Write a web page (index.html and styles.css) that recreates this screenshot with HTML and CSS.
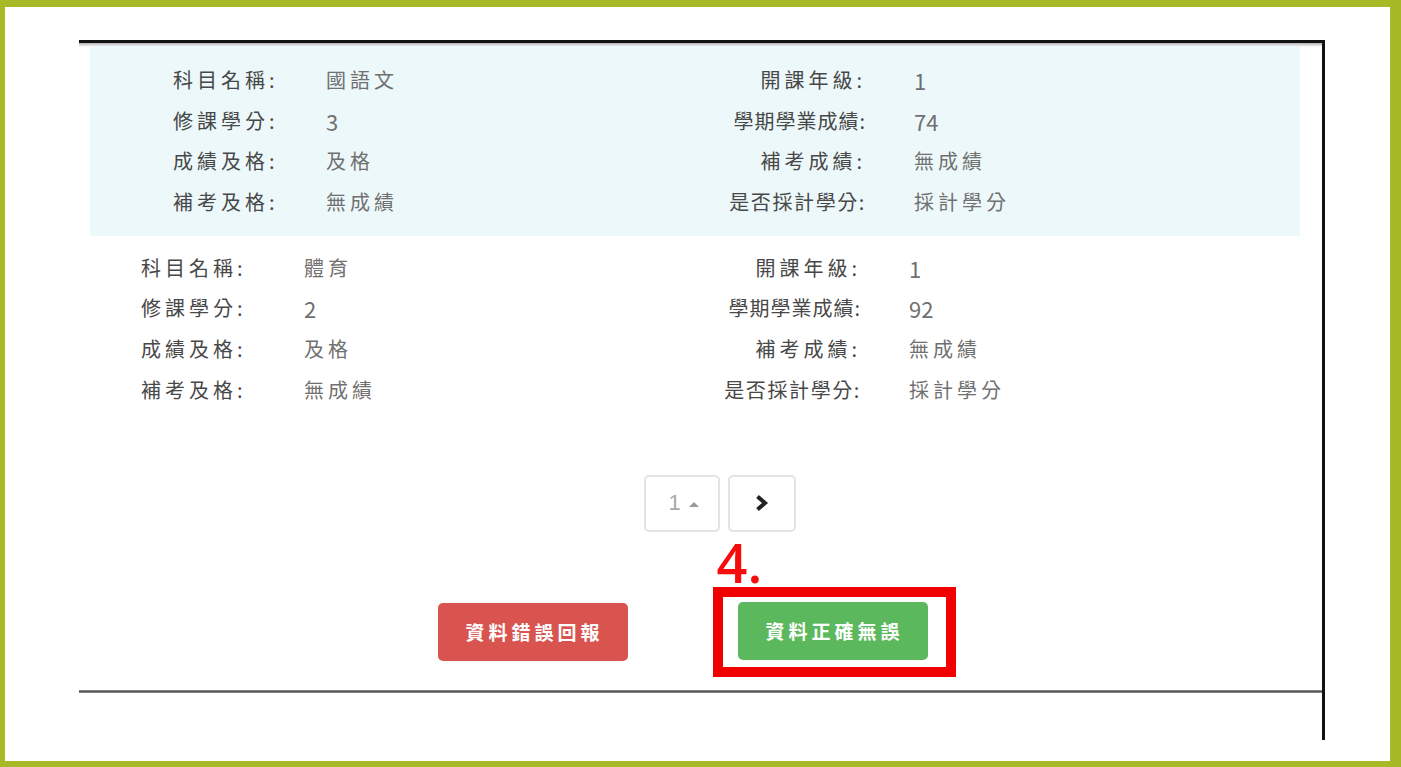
FILE: index.html
```html
<!DOCTYPE html>
<html lang="zh-Hant">
  <head>
    <meta charset="UTF-8" />
    <title>成績確認</title>
    <link rel="stylesheet" href="styles.css">
  </head>
  <body>
    <div class="frame">
      <div class="panel">
        <div class="record shaded">
          <span class="label">科目名稱:</span><span class="value">國語文</span>
          <span class="label right">開課年級:</span><span class="value right num">1</span>
          <span class="label">修課學分:</span><span class="value num">3</span>
          <span class="label right long">學期學業成績:</span><span class="value right num">74</span>
          <span class="label">成績及格:</span><span class="value">及格</span>
          <span class="label right">補考成績:</span><span class="value right">無成績</span>
          <span class="label">補考及格:</span><span class="value">無成績</span>
          <span class="label right long5">是否採計學分:</span><span class="value right">採計學分</span>
        </div>

        <div class="record">
          <span class="label">科目名稱:</span><span class="value">體育</span>
          <span class="label right">開課年級:</span><span class="value right num">1</span>
          <span class="label">修課學分:</span><span class="value num">2</span>
          <span class="label right long">學期學業成績:</span><span class="value right num">92</span>
          <span class="label">成績及格:</span><span class="value">及格</span>
          <span class="label right">補考成績:</span><span class="value right">無成績</span>
          <span class="label">補考及格:</span><span class="value">無成績</span>
          <span class="label right long5">是否採計學分:</span><span class="value right">採計學分</span>
        </div>

        <div class="pager">
          <span class="page current">1<span class="caret"></span></span>
          <a class="page next" href="#">
            <svg width="15" height="18" viewBox="0 0 15 18">
              <path d="M3.5 2.5 L11 9 L3.5 15.5" fill="none" stroke="#222" stroke-width="4" />
            </svg>
          </a>
        </div>

        <div class="actions">
          <button class="btn btn-danger" type="button">資料錯誤回報</button>
          <div class="callout">
            <span class="step">4.</span>
            <button class="btn btn-success" type="button">資料正確無誤</button>
          </div>
        </div>

        <div class="rule"></div>
      </div>
    </div>
  </body>
</html>
```

FILE: styles.css
```css
html,
body {
  margin: 0;
  background-color: #a8b928;
}

body {
  height: 767px;
  overflow: hidden;
  font-family: "Noto Sans CJK TC", "Noto Sans", sans-serif;
}

.frame {
  margin: 7px 11px 0 5px;
  height: 754px;
  padding: 33px 0 0 74px;
  box-sizing: border-box;
  background-color: #fff;
}

.panel {
  width: 1246px;
  height: 700px;
  box-sizing: border-box;
  border-top: 3px solid #111;
  border-right: 3px solid #111;
  background: linear-gradient(rgba(0, 0, 0, 0.3), rgba(0, 0, 0, 0)) no-repeat top / 100% 4px;
  padding-top: 3px;
}

.record {
  display: grid;
  grid-template-columns: 163px 400px 157px 1fr;
  grid-auto-rows: 40.7px;
  align-items: center;
  padding: 12px 0 0 62px;
  font-size: 20px;
  line-height: 40.7px;
  letter-spacing: 4px;
}

.record.shaded {
  grid-template-columns: 153px 383px 157px 1fr;
  margin: 0 22px 0 11px;
  padding: 14px 0 13px 83px;
  background-color: #ecf8fa;
}

.label {
  color: #484848;
  white-space: nowrap;
}

.label.right {
  text-align: right;
}

.label.long {
  letter-spacing: 1px;
}

.label.long5 {
  letter-spacing: 1.6px;
}

.value {
  color: #707070;
  white-space: nowrap;
}

.value.right {
  padding-left: 48px;
}

.value.num {
  font-size: 22px;
  letter-spacing: 0;
}

.pager {
  display: flex;
  justify-content: center;
  gap: 8px;
  margin-top: 64px;
  padding-left: 38px;
}

.page {
  display: flex;
  align-items: center;
  justify-content: center;
  height: 57px;
  box-sizing: border-box;
  border: 2px solid #e3e3e3;
  border-radius: 5px;
  text-decoration: none;
}

.page.current {
  width: 76px;
  color: #a8a8a8;
  font-family: "Liberation Sans", sans-serif;
  font-size: 22px;
  padding-left: 4px;
}

.caret {
  display: inline-block;
  margin-left: 8px;
  margin-top: 2px;
  border-left: 5px solid transparent;
  border-right: 5px solid transparent;
  border-bottom: 5px solid #9a9a9a;
}

.page.next {
  width: 68px;
}

.actions {
  display: flex;
  align-items: center;
  justify-content: center;
  gap: 85px;
  margin-top: 55px;
  padding-right: 8px;
}

.btn {
  width: 190px;
  height: 58px;
  border: none;
  border-radius: 5px;
  color: #fff;
  font-family: "Noto Sans CJK TC", sans-serif;
  font-size: 19px;
  font-weight: bold;
  letter-spacing: 4px;
  padding: 0 0 0 4px;
}

.btn-danger {
  background-color: #d9534f;
}

.btn-success {
  background-color: #5cb85c;
}

.callout {
  position: relative;
  border: 10px solid #f20000;
  padding: 5px 18px 7px 15px;
}

.step {
  position: absolute;
  left: -6px;
  top: -62px;
  color: #f50d0d;
  font-family: "Open Sans", sans-serif;
  font-size: 54px;
  font-weight: 600;
  line-height: 1;
}

.rule {
  margin-top: 13px;
  height: 3px;
  background: linear-gradient(#9a9a9a, #555, #9a9a9a);
}
```
